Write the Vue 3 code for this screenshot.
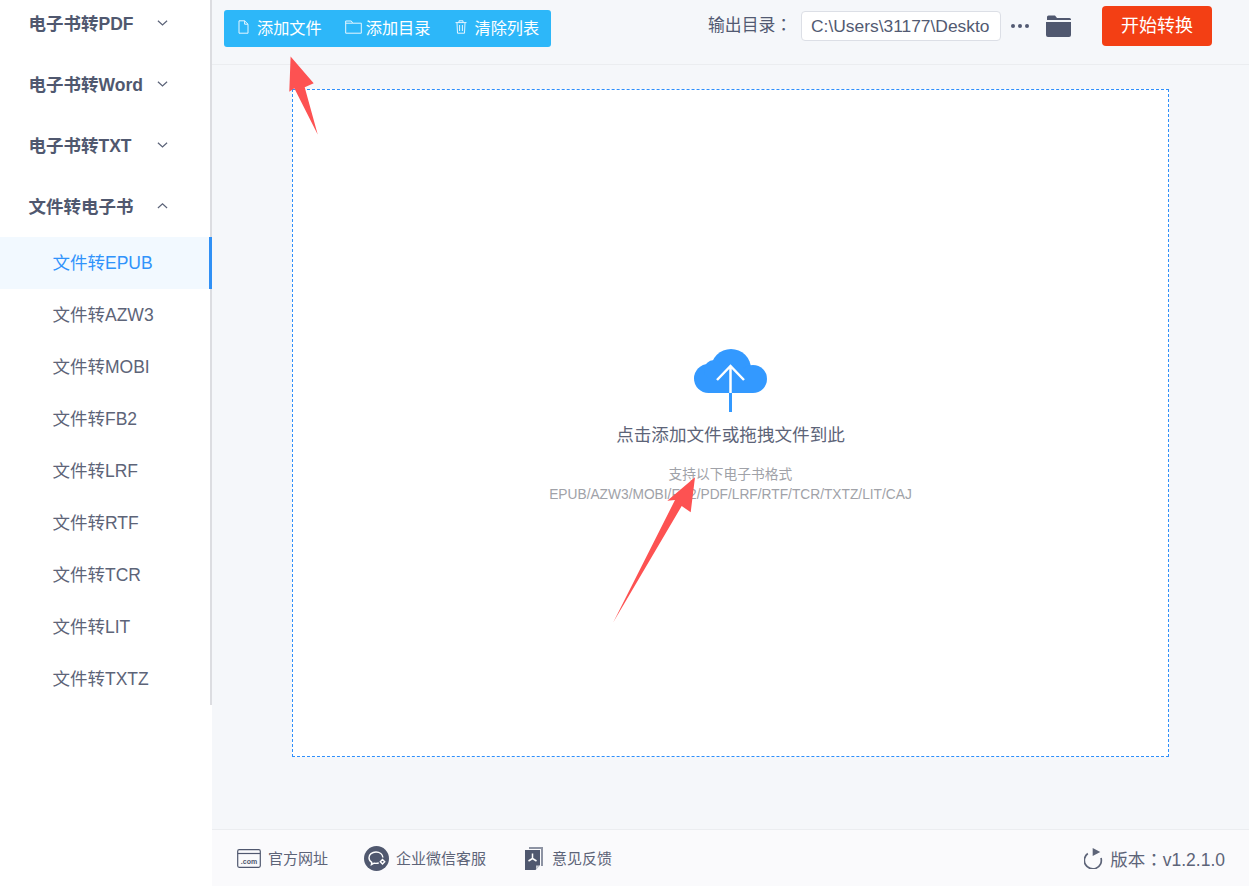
<script setup>
const groups = ['电子书转PDF', '电子书转Word', '电子书转TXT']
const items = ['文件转EPUB', '文件转AZW3', '文件转MOBI', '文件转FB2', '文件转LRF', '文件转RTF', '文件转TCR', '文件转LIT', '文件转TXTZ']
</script>

<template>
  <div class="app">
    <aside class="sidebar">
      <div class="menu">
        <div v-for="g in groups" :key="g" class="group">
          <span>{{ g }}</span>
          <svg class="chev" viewBox="0 0 12 8"><path d="M1 1.5 6 6.2 11 1.5" /></svg>
        </div>
        <div class="group">
          <span>文件转电子书</span>
          <svg class="chev" viewBox="0 0 12 8"><path d="M1 6.2 6 1.5 11 6.2" /></svg>
        </div>
        <div v-for="(item, i) in items" :key="item" class="item" :class="{ active: i === 0 }">{{ item }}</div>
      </div>
    </aside>

    <main class="main">
      <header class="toolbar">
        <div class="btn-group">
          <div class="tool">
            <svg class="ic-file" viewBox="0 0 11 14"><path d="M1 .8h5.6L10 4.2v9H1zM6.6.8v3.4H10" /></svg>
            <span>添加文件</span>
          </div>
          <div class="tool">
            <svg class="ic-folder" viewBox="0 0 17 14"><path d="M.7 1h5.6l1.4 2.2H16.3v10H.7zM.7 3.2h7" /></svg>
            <span>添加目录</span>
          </div>
          <div class="tool">
            <svg class="ic-trash" viewBox="0 0 12 14"><path d="M.5 2.6h11M4 2.4V.8h4v1.6M2 2.8l.5 10.4h7L10 2.8M4.6 5v6M7.4 5v6" /></svg>
            <span>清除列表</span>
          </div>
        </div>

        <div class="output">
          <span class="out-label">输出目录<span class="colon">：</span></span>
          <div class="path">C:\Users\31177\Deskto</div>
          <div class="dots"><i></i><i></i><i></i></div>
          <svg class="ic-open" viewBox="0 0 25 22"><path d="M1 4V2q0-1.500 1.500-1.500h6.500L11 3h12.500Q25 3 25 4.500V5H1zM0 7h25v13q0 2-2 2H2q-2 0-2-2z" /></svg>
          <div class="start">开始转换</div>
        </div>
      </header>

      <section class="content">
        <div class="drop">
          <svg class="cloud" viewBox="0 0 73 63">
            <g fill="#3399ff">
              <circle cx="14.500" cy="29.500" r="14.500" />
              <circle cx="37" cy="20" r="20" />
              <circle cx="20" cy="21" r="10" />
              <circle cx="59" cy="30" r="14" />
              <rect x="14" y="20" width="45" height="24" />
            </g>
            <path class="cloud-arrow" d="M23 31 36.500 17 50 31M36.500 17V44" />
            <path class="cloud-stem" d="M36.500 44V63" />
          </svg>
          <p class="drop-title">点击添加文件或拖拽文件到此</p>
          <p class="drop-sub">支持以下电子书格式</p>
          <p class="drop-sub">EPUB/AZW3/MOBI/FB2/PDF/LRF/RTF/TCR/TXTZ/LIT/CAJ</p>
        </div>
      </section>

      <footer class="footer">
        <div class="link">
          <svg class="ic-com" viewBox="0 0 24 19">
            <rect x=".7" y=".7" width="22.600" height="17.600" rx="1.500" />
            <path d="M.7 4.500h22.600" />
            <text x="12" y="15" text-anchor="middle">.com</text>
          </svg>
          <span>官方网址</span>
        </div>
        <div class="link">
          <svg class="ic-chat" viewBox="0 0 25 25">
            <circle class="solid" cx="12.500" cy="12.500" r="12.500" />
            <path class="line" d="M12 6c-4 0-7 2.500-7 5.800 0 2 1.100 3.600 2.800 4.600l-.4 2.200 2.600-1.400c.7.100 1.300.2 2 .2 1 0 2-.2 2.800-.5" />
            <path class="line" d="M18.900 11.500C18.600 8.300 15.700 6 12 6" />
            <path class="line" d="M18.500 13.500l2.200 2.200-2.200 2.200-2.200-2.200z" />
          </svg>
          <span>企业微信客服</span>
        </div>
        <div class="link">
          <svg class="ic-pdf" viewBox="0 0 18 23">
            <path class="back" d="M4 0h14v19h-2V2H4z" />
            <path class="solid" d="M0 3h15v15l-4.500 5H0z" />
            <path class="cut" d="M11 22.500V18.500h4z" />
            <path class="mark" d="M7.500 6.500v5M7.500 11.500l-4 2.500M7.500 11.500l4 2.500" />
          </svg>
          <span>意见反馈</span>
        </div>
        <div class="version">
          <svg class="ic-refresh" viewBox="0 0 19 21">
            <path class="arc" d="M3.800 5.500A8.500 8.500 0 1 0 17 10" />
            <path class="head" d="M8.700 0v8l7.600-4z" />
          </svg>
          <span>版本<span class="colon">：</span>v1.2.1.0</span>
        </div>
      </footer>
    </main>

    <!-- annotation arrows drawn over the screenshot -->
    <svg class="arrows" viewBox="0 0 1249 886">
      <polygon points="290.600,56.500 313.700,83.300 304.700,87.300 317.700,134.500 294.300,88.300 289.300,91.700" />
      <polygon points="695,477.300 690.700,512.300 681.700,506 613.300,622.300 675,500 667.300,500.700" />
    </svg>
  </div>
</template>

<style scoped>
.app {
  position: relative;
  display: flex;
  width: 1249px;
  height: 886px;
  overflow: hidden;
  background: #fff;
  color: #525a72;
  font-family: "Liberation Sans", "Noto Sans CJK SC", sans-serif;
}

.sidebar {
  flex: none;
  width: 212px;
  background: #fff;
}
.menu {
  margin-top: -7px;
  border-right: 2px solid #dcdde1;
}
.group {
  display: flex;
  align-items: center;
  justify-content: space-between;
  height: 61px;
  padding: 0 42px 2px 28.500px;
  box-sizing: border-box;
  font-size: 17.500px;
  font-weight: 700;
  color: #50586f;
}
.chev {
  width: 11px;
  height: 8px;
  fill: none;
  stroke: #5b6378;
  stroke-width: 1.300;
}
.item {
  display: flex;
  align-items: center;
  height: 52px;
  padding: 0 0 4px 52.500px;
  box-sizing: border-box;
  font-size: 17.500px;
  color: #5d6478;
}
.item.active {
  margin-right: -2px;
  background: #f2f9ff;
  border-right: 3px solid #3090f5;
  color: #3093fb;
}

.main {
  flex: 1;
  display: flex;
  flex-direction: column;
  min-width: 0;
  background: #f5f7fa;
}

.toolbar {
  flex: none;
  display: flex;
  align-items: flex-start;
  justify-content: space-between;
  height: 65px;
  padding: 0 37px 0 12px;
  border-bottom: 1px solid #ebedf0;
  box-sizing: border-box;
}
.btn-group {
  display: flex;
  align-items: center;
  width: 327px;
  height: 37px;
  margin-top: 10px;
  padding: 0 0 3px 14px;
  box-sizing: border-box;
  background: #2db7f9;
  border-radius: 3px;
  color: #fff;
  font-size: 16.200px;
}
.tool {
  display: flex;
  align-items: center;
}
.tool svg {
  fill: none;
  stroke: #e6f6ff;
  stroke-width: 1;
}
.ic-file { width: 11px; height: 14px; margin-right: 8px; }
.ic-folder { width: 17px; height: 14px; margin: 0 4px 0 23px; }
.ic-trash { width: 12px; height: 14px; margin: 0 8px 0 24px; }

.output {
  display: flex;
  align-items: center;
  height: 40px;
  margin-top: 6px;
}
.out-label {
  font-size: 16.800px;
  margin-right: 9px;
  padding-bottom: 5px;
}
.colon {
  font-family: "Noto Sans CJK TC", sans-serif;
}
.path {
  width: 200px;
  height: 30px;
  line-height: 28px;
  padding-left: 9px;
  box-sizing: border-box;
  overflow: hidden;
  white-space: nowrap;
  background: #fff;
  border: 1px solid #dcdfe6;
  border-radius: 4px;
  font-size: 17.400px;
}
.dots {
  display: flex;
  gap: 3px;
  margin: 0 17px 0 10px;
}
.dots i {
  width: 4px;
  height: 4px;
  border-radius: 50%;
  background: #525a72;
}
.ic-open {
  width: 25px;
  height: 22px;
  fill: #50586f;
  margin-right: 31px;
}
.start {
  width: 110px;
  height: 40px;
  line-height: 40px;
  text-align: center;
  background: #f33f14;
  border-radius: 4px;
  color: #fff;
  font-size: 18px;
}

.content {
  flex: 1;
  display: flex;
  padding: 24px 80px 72px;
  min-height: 0;
}
.drop {
  flex: 1;
  display: flex;
  flex-direction: column;
  align-items: center;
  padding-top: 259px;
  background: #fff;
  border: 1px dashed #2f8ffb;
}
.cloud {
  width: 73px;
  height: 63px;
}
.cloud-arrow {
  fill: none;
  stroke: #fff;
  stroke-width: 2.500;
}
.cloud-stem {
  fill: none;
  stroke: #3399ff;
  stroke-width: 3;
}
.drop-title {
  margin: 11px 0 18px;
  font-size: 17.600px;
  line-height: 24px;
  color: #5d6478;
}
.drop-sub {
  margin: 0;
  font-size: 13.750px;
  line-height: 20px;
  color: #a0a2a8;
}

.footer {
  flex: none;
  display: flex;
  align-items: center;
  height: 57px;
  padding: 0 24px 0 25px;
  box-sizing: border-box;
  background: #fafafc;
  border-top: 1px solid #ebedf0;
  font-size: 15px;
  color: #5d6478;
}
.link {
  display: flex;
  align-items: center;
  margin-right: 36px;
}
.link + .link {
  margin-right: 39px;
}
.link span {
  padding-bottom: 2px;
}
.ic-com {
  width: 24px;
  height: 19px;
  margin-right: 7px;
  fill: none;
  stroke: #50586f;
  stroke-width: 1.200;
}
.ic-com text {
  fill: #50586f;
  stroke: none;
  font-size: 7px;
  font-weight: 700;
}
.ic-chat {
  width: 25px;
  height: 25px;
  margin-right: 7px;
}
.ic-chat .solid { fill: #50586f; }
.ic-chat .line { fill: none; stroke: #fff; stroke-width: 1.400; }
.ic-pdf {
  width: 18px;
  height: 23px;
  margin-right: 9px;
}
.ic-pdf .back { fill: #8d93a3; }
.ic-pdf .solid { fill: #50586f; }
.ic-pdf .cut { fill: #c9ccd4; }
.ic-pdf .mark { fill: none; stroke: #fff; stroke-width: 1.500; }
.version {
  display: flex;
  align-items: center;
  margin-left: auto;
  font-size: 17.500px;
}
.ic-refresh {
  width: 19px;
  height: 21px;
  margin-right: 7px;
}
.ic-refresh .arc { fill: none; stroke: #5d6478; stroke-width: 1.700; }
.ic-refresh .head { fill: #5d6478; }

.arrows {
  position: absolute;
  inset: 0;
  width: 1249px;
  height: 886px;
  pointer-events: none;
  fill: #fd5252;
}
</style>

<style>
body { margin: 0; }
</style>
